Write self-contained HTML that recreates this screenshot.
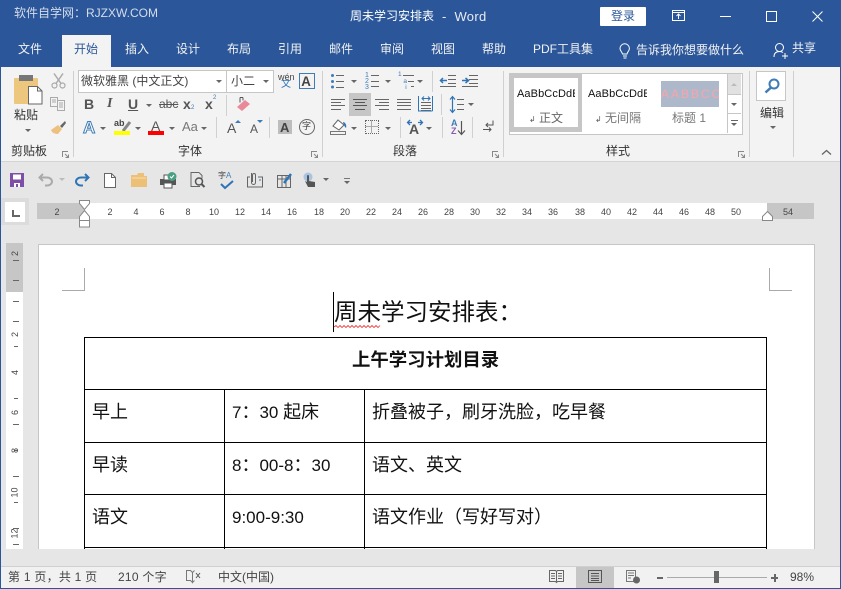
<!DOCTYPE html>
<html><head><meta charset="utf-8">
<style>
html,body{margin:0;padding:0}
body{width:841px;height:589px;overflow:hidden;position:relative;background:#e6e6e6;font-family:"Liberation Sans","Noto Sans CJK SC",sans-serif;color:#444}
.a,.t{position:absolute}
.t{white-space:nowrap;line-height:1}
.w{color:#fff}
.tab{top:43px;font-size:12px;color:#f2f2f2}
.n{top:208px;font-size:9px;color:#444;width:20px;text-align:center}
.lb{font-size:12px;color:#333;top:145px}
.sep{position:absolute;width:1px;background:#d0d0d0}
.vr{position:absolute;left:13px;width:6px;height:1px;background:#666}
.dd{position:absolute;width:0;height:0;border-left:3px solid transparent;border-right:3px solid transparent;border-top:3px solid #666}
.cell{position:absolute;font-size:18px;color:#111;white-space:nowrap;line-height:1;font-family:"Liberation Sans","Noto Sans CJK SC",sans-serif}
.cell span{font-size:17px}
.b{position:absolute;background:#000}
svg{position:absolute;overflow:visible}
</style></head><body>

<!-- title bar -->
<div class="a" style="left:0;top:0;width:841px;height:67px;background:#2b579a"></div>
<div class="t" style="left:14px;top:7px;font-size:12px;color:#d5dcea">软件自学网：RJZXW.COM</div>
<div class="t w" style="left:350px;top:10px;font-size:12px">周未学习安排表</div>
<div class="t" style="left:442px;top:10px;font-size:13px;color:#e8ecf4;letter-spacing:.3px">-&nbsp;&nbsp;Word</div>
<div class="a" style="left:600px;top:7px;width:46px;height:19px;background:#fff;border-radius:1px"></div>
<div class="t" style="left:611px;top:10px;font-size:12px;color:#2b579a">登录</div>
<svg style="left:672px;top:10px" width="14" height="12"><rect x=".5" y=".5" width="12" height="10" fill="none" stroke="#fff"/><path d="M.5 2.500h12M6.500 9V4.500M4.500 6l2-2 2 2" fill="none" stroke="#fff"/></svg>
<div class="a" style="left:720px;top:16px;width:11px;height:1px;background:#fff"></div>
<div class="a" style="left:766px;top:11px;width:9px;height:9px;border:1px solid #fff"></div>
<svg style="left:812px;top:11px" width="12" height="11"><path d="M.5.500l10 10M10.500.500l-10 10" stroke="#fff" fill="none"/></svg>

<!-- tabs -->
<div class="a" style="left:62px;top:35px;width:49px;height:32px;background:#f3f3f3"></div>
<div class="t tab" style="left:18px">文件</div>
<div class="t tab" style="left:74px;color:#2b579a">开始</div>
<div class="t tab" style="left:125px">插入</div>
<div class="t tab" style="left:176px">设计</div>
<div class="t tab" style="left:227px">布局</div>
<div class="t tab" style="left:278px">引用</div>
<div class="t tab" style="left:329px">邮件</div>
<div class="t tab" style="left:380px">审阅</div>
<div class="t tab" style="left:431px">视图</div>
<div class="t tab" style="left:482px">帮助</div>
<div class="t tab" style="left:533px">PDF工具集</div>
<svg style="left:618px;top:43px" width="14" height="17"><path d="M4.500 11C4 8.500 2 8 2 5.500a4.700 4.700 0 0 1 9.400 0C11.400 8 9.500 8.500 9 11zM5 13h4M5.500 15h3" fill="none" stroke="#fff"/></svg>
<div class="t tab" style="left:636px;top:44px">告诉我你想要做什么</div>
<svg style="left:773px;top:42px" width="16" height="17"><circle cx="6.500" cy="5.500" r="4" fill="none" stroke="#fff"/><path d="M1 15c0-4 2-5.500 5.500-5.500 1.500 0 2.500.3 3.500 1M9 14h6M12 11v6" fill="none" stroke="#fff"/></svg>
<div class="t tab" style="left:792px;top:42px">共享</div>

<!-- ribbon -->
<div class="a" style="left:0;top:67px;width:841px;height:94px;background:#f3f3f3;border-bottom:1px solid #d4d4d4"></div>
<div class="sep" style="left:73px;top:71px;height:86px"></div>
<div class="sep" style="left:322px;top:71px;height:86px"></div>
<div class="sep" style="left:503px;top:71px;height:86px"></div>
<div class="sep" style="left:749px;top:71px;height:86px"></div>
<div class="sep" style="left:793px;top:71px;height:86px"></div>

<!-- clipboard -->
<div class="a" style="left:14px;top:78px;width:24px;height:26px;background:#edc77e;border-radius:1px"></div>
<div class="a" style="left:19px;top:75px;width:14px;height:6px;background:#777"></div>
<svg style="left:28px;top:86px" width="15" height="19"><path d="M.5.500h9l4.500 4.500v13H.5z" fill="#fff" stroke="#666"/><path d="M9.500.500v4.500h4.500" fill="none" stroke="#666"/></svg>
<div class="t" style="left:14px;top:109px;font-size:12px;color:#333">粘贴</div>
<div class="dd" style="left:25px;top:129px"></div>
<svg style="left:51px;top:73px" width="15" height="16"><path d="M3 .5l7 10M12 .5l-7 10" stroke="#aaa" stroke-width="1.500" fill="none"/><circle cx="3.500" cy="12.500" r="2.500" fill="none" stroke="#aaa" stroke-width="1.200"/><circle cx="11.500" cy="12.500" r="2.500" fill="none" stroke="#aaa" stroke-width="1.200"/></svg>
<svg style="left:50px;top:97px" width="16" height="14"><path d="M.5.500h7v9h-7zM7.500 3.500h7v10h-7zM2 3h4M2 5h4M9 6h4M9 8h4M9 10h4" fill="#f3f3f3" stroke="#aaa"/></svg>
<svg style="left:50px;top:120px" width="17" height="15"><path d="M1 10L8 5l4 4-4 5c-3 0-6-1-7-4z" fill="#edc080"/><path d="M10 6l5-5 1 2-4 5z" fill="#666"/></svg>
<div class="t lb" style="left:11px;color:#333">剪贴板</div>
<svg style="left:62px;top:151px" width="7" height="7"><path d="M.5 6V.5H6M3 3l3.500 3.500M6.500 3.500v3h-3" fill="none" stroke="#888"/></svg>

<!-- font -->
<div class="a" style="left:78px;top:70px;width:148px;height:21px;background:#fff;border:1px solid #c6c6c6"></div>
<div class="a" style="left:226px;top:70px;width:46px;height:21px;background:#fff;border:1px solid #c6c6c6"></div>
<div class="t" style="left:81px;top:75px;font-size:12px;color:#444">微软雅黑 (中文正文)</div>
<div class="t" style="left:231px;top:75px;font-size:12px;color:#444">小二</div>
<div class="dd" style="left:216px;top:80px"></div>
<div class="dd" style="left:263px;top:80px"></div>
<div class="t" style="left:278px;top:73px;font-size:9px;color:#444">wén</div>
<div class="t" style="left:281px;top:80px;font-size:10px;color:#2f75b5">文</div>
<div class="a" style="left:299px;top:73px;width:14px;height:14px;border:1px solid #3f7cb5"></div>
<div class="t" style="left:301px;top:74px;font-size:14px;color:#444;font-weight:bold;transform:scaleX(.95)">A</div>
<div class="t" style="left:84px;top:97px;font-size:14px;font-weight:bold;color:#555">B</div>
<div class="t" style="left:107px;top:97px;font-size:14px;font-style:italic;color:#555;font-family:'Liberation Serif',serif;font-weight:bold">I</div>
<div class="t" style="left:128px;top:97px;font-size:14px;font-weight:bold;color:#555;text-decoration:underline">U</div>
<div class="dd" style="left:146px;top:104px"></div>
<div class="t" style="left:159px;top:98px;font-size:12px;color:#555;text-decoration:line-through">abc</div>
<div class="t" style="left:183px;top:97px;font-size:14px;font-weight:bold;color:#555">x</div>
<div class="t" style="left:191px;top:105px;font-size:6px;color:#3f7cb5">2</div>
<div class="t" style="left:205px;top:97px;font-size:14px;font-weight:bold;color:#555">x</div>
<div class="t" style="left:213px;top:95px;font-size:6px;color:#3f7cb5">2</div>
<div class="sep" style="left:226px;top:95px;height:21px"></div>
<svg style="left:236px;top:96px" width="16" height="16"><path d="M1 11l8-7 5 4-8 7z" fill="#e98a9a"/><path d="M4 1.500h3M4 1.500v5M7 1.500v3" stroke="#555" fill="none"/></svg>
<div class="t" style="left:83px;top:119px;font-size:17px;font-weight:bold;color:#fff;-webkit-text-stroke:1px #3f7cb5">A</div>
<div class="dd" style="left:100px;top:127px"></div>
<div class="t" style="left:114px;top:119px;font-size:9px;color:#444;font-weight:bold">ab</div>
<svg style="left:122px;top:120px" width="10" height="12"><path d="M1 11L8 2" stroke="#888" stroke-width="3" fill="none"/></svg>
<div class="a" style="left:114px;top:131px;width:16px;height:4px;background:#ff0"></div>
<div class="dd" style="left:135px;top:127px"></div>
<div class="t" style="left:151px;top:119px;font-size:14px;color:#555">A</div>
<div class="a" style="left:148px;top:131px;width:16px;height:4px;background:#f00"></div>
<div class="dd" style="left:169px;top:127px"></div>
<div class="t" style="left:182px;top:120px;font-size:13px;color:#777">Aa</div>
<div class="dd" style="left:201px;top:127px"></div>
<div class="sep" style="left:216px;top:117px;height:21px"></div>
<div class="t" style="left:227px;top:121px;font-size:14px;color:#555">A</div>
<div class="a" style="left:235px;top:120px;border-left:3px solid transparent;border-right:3px solid transparent;border-bottom:3px solid #3f7cb5"></div>
<div class="t" style="left:250px;top:123px;font-size:12px;color:#555">A</div>
<div class="dd" style="left:257px;top:120px;border-top-color:#3f7cb5"></div>
<div class="sep" style="left:269px;top:117px;height:21px"></div>
<div class="a" style="left:278px;top:120px;width:14px;height:14px;background:#bdbdbd"></div>
<div class="t" style="left:280px;top:121px;font-size:13px;color:#444;font-weight:bold">A</div>
<div class="a" style="left:299px;top:119px;width:14px;height:14px;border:1px solid #666;border-radius:50%"></div>
<div class="t" style="left:302px;top:122px;font-size:9px;color:#444">字</div>
<div class="t lb" style="left:178px">字体</div>
<svg style="left:311px;top:151px" width="7" height="7"><path d="M.5 6V.5H6M3 3l3.500 3.500M6.500 3.500v3h-3" fill="none" stroke="#888"/></svg>

<!-- paragraph -->
<div class="a" style="left:349px;top:93px;width:22px;height:23px;background:#c6c6c6"></div>
<svg style="left:0;top:0" width="841" height="589" fill="none">
<g stroke="#666">
<path d="M336 75.500h8M336 81.500h8M336 87.500h8"/>
<path d="M371 75.500h8M371 81.500h8M371 86.500h8"/>
<path d="M403 75.500h11M408 81.500h6M411 86.500h3"/>
<path d="M331 99.500h14M331 102.500h10M331 105.500h14M331 109.500h10"/>
<path d="M353 99.500h14M355 102.500h10M353 105.500h14M355 109.500h10" stroke="#555"/>
<path d="M375 99.500h14M379 102.500h10M375 105.500h14M379 109.500h10"/>
<path d="M397 99.500h14M397 102.500h14M397 105.500h14M397 109.500h14"/>
<path d="M421 102.500h10M421 105.500h10M421 108.500h10M421 110.500h10"/>
<path d="M448 75.500h8M448 79.500h8M448 83.500h8M440 86.500h16M469 75.500h9M469 79.500h9M469 83.500h9M462 86.500h16"/>
<path d="M457 99.500h7M457 104.500h7M457 109.500h7"/>
</g>
<g fill="#3f7cb5"><circle cx="332.500" cy="75.500" r="1.500"/><circle cx="332.500" cy="81.500" r="1.500"/><circle cx="332.500" cy="87" r="1.500"/></g>
<path d="M440 80.500h7M443 78l-2.500 2.500 2.500 2.500M462 80.500h7M465.500 78l3 2.500-3 2.500" stroke="#2f75b5" stroke-width="1.500"/>
<path d="M418.500 96v15h14M422 98.500h8M424 96.500l-2 2 2 2M428 96.500l2 2-2 2M432.500 96v15" stroke="#2f75b5"/>
<path d="M452.500 97v15M450 99.500l2.500-3 2.500 3M450 109.500l2.500 3 2.500-3" stroke="#2f75b5" stroke-width="1.200"/>
</svg>
<div class="dd" style="left:351px;top:80px"></div>
<div class="dd" style="left:385px;top:80px"></div>
<div class="dd" style="left:417px;top:80px"></div>
<div class="t" style="left:365px;top:73px;font-size:7px;color:#3f7cb5;line-height:6px;white-space:pre">1
2
3</div>
<div class="t" style="left:398px;top:72px;font-size:6.500px;color:#3f7cb5;line-height:6.500px;white-space:pre">1
   a
    i</div>
<div class="sep" style="left:432px;top:71px;height:21px"></div>
<div class="sep" style="left:441px;top:94px;height:21px"></div>
<div class="dd" style="left:468px;top:103px"></div>
<svg style="left:330px;top:118px" width="18" height="18" fill="none"><path d="M.5 16.500h15v-3H.5z" stroke="#777"/><path d="M3 8l5-6 6 5-5 5z" fill="#fff" stroke="#666"/><path d="M13 4c2 0 4 3 3 6-1-1-2-2-3-6z" fill="#2f75b5"/></svg>
<div class="dd" style="left:351px;top:127px"></div>
<div class="a" style="left:365px;top:120px;width:12px;height:12px;border:1px dotted #666"></div>
<div class="a" style="left:371px;top:120px;width:1px;height:13px;background:#aaa"></div>
<div class="a" style="left:365px;top:126px;width:13px;height:1px;background:#aaa"></div>
<div class="dd" style="left:385px;top:127px"></div>
<div class="sep" style="left:400px;top:117px;height:21px"></div>
<div class="t" style="left:409px;top:122px;font-size:14px;font-weight:bold;color:#555">A</div>
<svg style="left:407px;top:119px" width="20" height="8" fill="none"><path d="M5 3.500H1M3 1L.5 3.500 3 6M11 3.500h4M13 1l2.500 2.500L13 6" stroke="#2f75b5" stroke-width="1.300"/></svg>
<div class="dd" style="left:426px;top:127px"></div>
<div class="sep" style="left:442px;top:117px;height:21px"></div>
<div class="t" style="left:451px;top:119px;font-size:9px;line-height:8px;font-weight:bold;color:#3f7cb5">A<br><span style="color:#8a5bb0">Z</span></div>
<svg style="left:457px;top:120px" width="9" height="16" fill="none"><path d="M4.500 1v13M1 10.500l3.500 4 3.500-4" stroke="#555" stroke-width="1.200"/></svg>
<div class="sep" style="left:472px;top:117px;height:21px"></div>
<svg style="left:482px;top:120px" width="14" height="14" fill="none"><path d="M11 .5V5H4M6 3L4 5l2 2M1 9.500h8M7 7.500l2 2-2 2" stroke="#555"/></svg>
<div class="t lb" style="left:393px">段落</div>
<svg style="left:492px;top:151px" width="7" height="7"><path d="M.5 6V.5H6M3 3l3.500 3.500M6.500 3.500v3h-3" fill="none" stroke="#888"/></svg>

<!-- styles -->
<div class="a" style="left:509px;top:73px;width:232px;height:60px;background:#fff;border:1px solid #c6c6c6"></div>
<div class="a" style="left:510px;top:74px;width:72px;height:58px;background:#c6c6c6"></div>
<div class="a" style="left:514px;top:78px;width:64px;height:49px;background:#fff"></div>
<div class="a" style="left:661px;top:81px;width:58px;height:26px;background:#adb9ca"></div>
<div class="t" style="left:517px;top:89px;width:58px;overflow:hidden;font-size:11px;color:#111;letter-spacing:.1px">AaBbCcDdE</div>
<div class="t" style="left:588px;top:89px;width:59px;overflow:hidden;font-size:11px;color:#111;letter-spacing:.1px">AaBbCcDdE</div>
<div class="t" style="left:661px;top:88px;width:58px;overflow:hidden;font-size:12px;color:#f9a4ab;letter-spacing:2px">AABBCCD</div>
<div class="t" style="left:529px;top:112px;font-size:12px;color:#666"><span style="font-size:8px;color:#555">↲</span> 正文</div>
<div class="t" style="left:595px;top:112px;font-size:12px;color:#777"><span style="font-size:8px;color:#555">↲</span> 无间隔</div>
<div class="t" style="left:672px;top:112px;font-size:12px;color:#777">标题 1</div>
<div class="a" style="left:727px;top:74px;width:14px;height:20px;background:#e1e1e1;border-bottom:1px solid #c6c6c6"></div>
<div class="a" style="left:727px;top:74px;width:1px;height:59px;background:#c6c6c6"></div>
<div class="a" style="left:727px;top:113px;width:14px;height:1px;background:#c6c6c6"></div>
<div class="a" style="left:731px;top:83px;border-left:3px solid transparent;border-right:3px solid transparent;border-bottom:3px solid #bbb"></div>
<div class="dd" style="left:731px;top:103px"></div>
<div class="a" style="left:731px;top:120px;width:7px;height:1px;background:#666"></div>
<div class="dd" style="left:731px;top:123px"></div>
<div class="t lb" style="left:606px">样式</div>
<svg style="left:738px;top:151px" width="7" height="7"><path d="M.5 6V.5H6M3 3l3.500 3.500M6.500 3.500v3h-3" fill="none" stroke="#888"/></svg>

<!-- editing -->
<div class="a" style="left:756px;top:71px;width:28px;height:28px;background:#fff;border:1px solid #c6c6c6"></div>
<svg style="left:764px;top:78px" width="16" height="16" fill="none"><circle cx="10" cy="6" r="4.500" stroke="#3f7cb5" stroke-width="2"/><path d="M7 9.500L1.500 14.500" stroke="#3f7cb5" stroke-width="2.500"/></svg>
<div class="t" style="left:760px;top:107px;font-size:12px;color:#333">编辑</div>
<div class="dd" style="left:770px;top:126px"></div>
<svg style="left:821px;top:149px" width="11" height="7" fill="none"><path d="M1 5.500l4.500-4 4.500 4" stroke="#666" stroke-width="1.300"/></svg>

<!-- QAT -->
<div class="a" style="left:0;top:162px;width:841px;height:36px;background:#e6e6e6"></div>
<svg style="left:10px;top:173px" width="14" height="14"><path d="M0 0h14v14H0z" fill="#7f4fa8"/><path d="M3 1.500h8v5H3z" fill="#fff"/><path d="M4 10h6v4H4z" fill="#fff"/><path d="M6 11h2v3H6z" fill="#7f4fa8"/></svg>
<svg style="left:38px;top:173px" width="16" height="14" fill="none"><path d="M5 1L1.500 4.500 5 8M2 4.500h7c3 0 5 2 5 4s-2 4-5 4H7" stroke="#aaa" stroke-width="2"/></svg>
<div class="dd" style="left:59px;top:178px;border-top-color:#bbb"></div>
<svg style="left:74px;top:173px" width="16" height="14" fill="none"><path d="M11 1l3.500 3.500L11 8M14 4.500H7c-3 0-5 2-5 4s2 4 5 4h2" stroke="#2f75b5" stroke-width="2"/></svg>
<svg style="left:104px;top:173px" width="12" height="15"><path d="M.5.500h7l4 4v10H.5z" fill="#fff" stroke="#666"/><path d="M7.500.500v4h4" fill="none" stroke="#666"/></svg>
<svg style="left:131px;top:173px" width="16" height="14"><path d="M0 2h6l1-2h6v3H16v11H0z" fill="#edc077"/><path d="M1 5h14" stroke="#f8e0b0"/></svg>
<svg style="left:160px;top:172px" width="17" height="16"><path d="M0 7h16v6H0z" fill="#555"/><path d="M4 3h8v5H4zM4 11h8v5H4z" fill="#fff" stroke="#555"/><circle cx="12" cy="4.500" r="4.500" fill="#4aa085"/><path d="M10 4.500l1.500 1.500 2.500-3" stroke="#fff" fill="none"/></svg>
<svg style="left:190px;top:172px" width="16" height="16" fill="none"><path d="M9 .5H1v14h9M9 .5l3 3v3" stroke="#666"/><circle cx="9" cy="9.500" r="3.500" stroke="#555" stroke-width="1.500"/><path d="M11.500 12l3 3" stroke="#555" stroke-width="2"/></svg>
<div class="t" style="left:218px;top:172px;font-size:8px;color:#444">字<span style="color:#3f7cb5">A</span></div>
<svg style="left:220px;top:180px" width="14" height="9" fill="none"><path d="M1 4l4 4 8-7" stroke="#2f75b5" stroke-width="2"/></svg>
<svg style="left:247px;top:172px" width="16" height="16" fill="none"><path d="M4.500 1v9.500a2 2 0 0 0 4 0V3a1.400 1.400 0 0 0-3 0v7" stroke="#666"/><path d="M3 5H.5v10h15V5H11" stroke="#666"/><path d="M12 8h2" stroke="#3f7cb5"/></svg>
<svg style="left:277px;top:172px" width="16" height="16" fill="none"><path d="M.5 3.500h13v12H.5zM.5 7h13M5 3.500v12M9 3.500v12" stroke="#666"/><path d="M7 11l7-9" stroke="#2f75b5" stroke-width="2.500"/></svg>
<svg style="left:303px;top:172px" width="15" height="16"><circle cx="5" cy="5" r="4.500" fill="#a9c4e0"/><path d="M4 4a1 1 0 0 1 2 0v5l6 1v5H5L2 9l2 1z" fill="#555"/></svg>
<div class="dd" style="left:323px;top:178px"></div>
<div class="a" style="left:344px;top:178px;width:6px;height:1px;background:#777"></div>
<div class="dd" style="left:344px;top:181px"></div>

<!-- ruler -->
<div class="a" style="left:1px;top:198px;width:28px;height:27px;background:#dcdcdc"></div>
<div class="a" style="left:5px;top:202px;width:20px;height:20px;background:#fff"></div>
<div class="a" style="left:12px;top:210px;width:8px;height:7px;border-left:2px solid #666;border-bottom:2px solid #666;box-sizing:border-box"></div>
<div class="a" style="left:37px;top:203px;width:777px;height:16px;background:#fff"></div>
<div class="a" style="left:37px;top:203px;width:47px;height:16px;background:#c6c6c6"></div>
<div class="a" style="left:767px;top:203px;width:47px;height:16px;background:#c6c6c6"></div>
<div class="t n" style="left:47px">2</div><div class="t n" style="left:100px">2</div><div class="t n" style="left:126px">4</div><div class="t n" style="left:152px">6</div><div class="t n" style="left:178px">8</div><div class="t n" style="left:204px">10</div><div class="t n" style="left:230px">12</div><div class="t n" style="left:256px">14</div><div class="t n" style="left:282px">16</div><div class="t n" style="left:309px">18</div><div class="t n" style="left:335px">20</div><div class="t n" style="left:361px">22</div><div class="t n" style="left:387px">24</div><div class="t n" style="left:413px">26</div><div class="t n" style="left:439px">28</div><div class="t n" style="left:465px">30</div><div class="t n" style="left:491px">32</div><div class="t n" style="left:517px">34</div><div class="t n" style="left:543px">36</div><div class="t n" style="left:570px">38</div><div class="t n" style="left:596px">40</div><div class="t n" style="left:622px">42</div><div class="t n" style="left:648px">44</div><div class="t n" style="left:674px">46</div><div class="t n" style="left:700px">48</div><div class="t n" style="left:726px">50</div><div class="t n" style="left:778px">54</div>
<svg style="left:79px;top:200px" width="12" height="28"><path d="M.5.500h10v3l-5 6-5-6z" fill="#fff" stroke="#888"/><path d="M5.500 10.500l5 6v4H.5v-4z" fill="#fff" stroke="#888"/><path d="M.5 20.500h10v6.500H.5z" fill="#fff" stroke="#888"/></svg>
<svg style="left:762px;top:211px" width="12" height="11"><path d="M5.500.500l5 5v4H.5v-4z" fill="#fff" stroke="#888"/></svg>

<!-- vertical ruler -->
<div class="a" style="left:6px;top:243px;width:17px;height:306px;background:#fff"></div>
<div class="a" style="left:6px;top:243px;width:17px;height:49px;background:#c6c6c6"></div>
<div class="vr" style="top:260px"></div><div class="vr" style="top:280px"></div><div class="vr" style="top:301px"></div><div class="vr" style="top:321px"></div>
<div class="vr" style="top:346px;left:14px;width:4px"></div><div class="vr" style="top:398px;left:14px;width:4px"></div><div class="vr" style="top:424px"></div><div class="vr" style="top:450px;left:14px;width:4px"></div><div class="vr" style="top:476px"></div><div class="vr" style="top:502px;left:14px;width:4px"></div><div class="vr" style="top:528px"></div>
<div class="vr" style="top:544px"></div>
<div class="t" style="left:13px;top:249px;font-size:9px;color:#444;transform:rotate(-90deg)">2</div>
<div class="t" style="left:13px;top:330px;font-size:9px;color:#444;transform:rotate(-90deg)">2</div>
<div class="t" style="left:13px;top:368px;font-size:9px;color:#444;transform:rotate(-90deg)">4</div>
<div class="t" style="left:13px;top:408px;font-size:9px;color:#444;transform:rotate(-90deg)">6</div>
<div class="t" style="left:13px;top:446px;font-size:9px;color:#444;transform:rotate(-90deg)">8</div>
<div class="t" style="left:10px;top:488px;font-size:9px;color:#444;transform:rotate(-90deg)">10</div>
<div class="t" style="left:10px;top:529px;font-size:9px;color:#444;transform:rotate(-90deg)">12</div>

<!-- page -->
<div class="a" style="left:38px;top:244px;width:777px;height:305px;background:#fff;border:1px solid #c6c6c6;border-bottom:0;box-sizing:border-box"></div>
<div class="a" style="left:62px;top:268px;width:22px;height:22px;border-right:1px solid #aaa;border-bottom:1px solid #aaa"></div>
<div class="a" style="left:769px;top:268px;width:22px;height:22px;border-left:1px solid #aaa;border-bottom:1px solid #aaa"></div>

<div class="a" style="left:333px;top:292px;width:1px;height:40px;background:#000"></div>
<div class="t" style="left:334px;top:301px;font-size:23.500px;color:#111">周未学习安排表：</div>
<svg style="left:334px;top:325px" width="48" height="4"><path d="M0 2l2-1.500 2 2 2-2 2 2 2-2 2 2 2-2 2 2 2-2 2 2 2-2 2 2 2-2 2 2 2-2 2 2 2-2 2 2 2-2 2 2 2-2 2 2 2-2" stroke="#e33" fill="none" stroke-width=".8"/></svg>

<!-- table -->
<div class="b" style="left:84px;top:337px;width:683px;height:1px"></div>
<div class="b" style="left:84px;top:389px;width:683px;height:1px"></div>
<div class="b" style="left:84px;top:442px;width:683px;height:1px"></div>
<div class="b" style="left:84px;top:494px;width:683px;height:1px"></div>
<div class="b" style="left:84px;top:547px;width:683px;height:1px"></div>
<div class="b" style="left:84px;top:337px;width:1px;height:212px"></div>
<div class="b" style="left:766px;top:337px;width:1px;height:212px"></div>
<div class="b" style="left:224px;top:389px;width:1px;height:160px"></div>
<div class="b" style="left:364px;top:389px;width:1px;height:160px"></div>

<div class="cell" style="left:352px;top:351px;font-weight:bold;font-size:18.400px">上午学习计划目录</div>
<div class="cell" style="left:92px;top:403px">早上</div>
<div class="cell" style="left:232px;top:403px"><span>7</span>：<span>30 </span>起床</div>
<div class="cell" style="left:372px;top:403px">折叠被子，刷牙洗脸，吃早餐</div>
<div class="cell" style="left:92px;top:456px">早读</div>
<div class="cell" style="left:232px;top:456px"><span>8</span>：<span>00-8</span>：<span>30</span></div>
<div class="cell" style="left:372px;top:456px">语文、英文</div>
<div class="cell" style="left:92px;top:508px">语文</div>
<div class="cell" style="left:232px;top:508px"><span>9:00-9:30</span></div>
<div class="cell" style="left:372px;top:508px">语文作业（写好写对）</div>

<!-- status bar -->
<div class="a" style="left:0;top:566px;width:841px;height:22px;background:#f1f1f1;border-top:1px solid #d0d0d0;box-sizing:border-box"></div>
<div class="t" style="left:8px;top:571px;font-size:12px;color:#444;letter-spacing:.25px">第 1 页，共 1 页</div>
<div class="t" style="left:118px;top:571px;font-size:12px;color:#444;letter-spacing:.25px">210 个字</div>
<svg style="left:186px;top:570px" width="15" height="13" fill="none"><path d="M.5.500h4l2 2v10l-2-2h-4zM6.500 2.500L8.500.5M6.500 12.500l2-2" stroke="#777"/><path d="M10 3l4 5M14 3l-4 5" stroke="#555"/></svg>
<div class="t" style="left:218px;top:571px;font-size:12px;color:#444">中文(中国)</div>
<svg style="left:549px;top:570px" width="15" height="13" fill="none"><path d="M.5.500h6l1 1 1-1h6v11h-6l-1 1-1-1h-6zM7.500 1.500v10M2 3.500h4M2 6h4M2 8.500h4M9 3.500h4M9 6h4M9 8.500h4" stroke="#666"/></svg>
<div class="a" style="left:576px;top:567px;width:38px;height:21px;background:#c6c6c6"></div>
<svg style="left:588px;top:570px" width="15" height="14" fill="none"><path d="M.5.500h13v12H.5zM3 3.500h8M3 6h8M3 8.500h8M3 10.500h8" stroke="#555"/></svg>
<svg style="left:626px;top:570px" width="15" height="14" fill="none"><path d="M.5.500h9v11h-9zM2 3h6M2 5.500h6M2 8h3" stroke="#777"/><circle cx="10.500" cy="10" r="3.500" fill="#666"/></svg>
<div class="a" style="left:657px;top:577px;width:6px;height:2px;background:#666"></div>
<div class="a" style="left:667px;top:577px;width:100px;height:1px;background:#aaa"></div>
<div class="a" style="left:714px;top:571px;width:5px;height:12px;background:#666"></div>
<div class="a" style="left:771px;top:577px;width:7px;height:2px;background:#666"></div>
<div class="a" style="left:774px;top:574px;width:2px;height:8px;background:#666"></div>
<div class="t" style="left:790px;top:571px;font-size:12px;color:#444">98%</div>

<!-- window border -->
<div class="a" style="left:0;top:67px;width:1px;height:522px;background:#2b579a"></div>
<div class="a" style="left:840px;top:67px;width:1px;height:522px;background:#2b579a"></div>
<div class="a" style="left:0;top:588px;width:841px;height:1px;background:#2b579a"></div>
</body></html>
